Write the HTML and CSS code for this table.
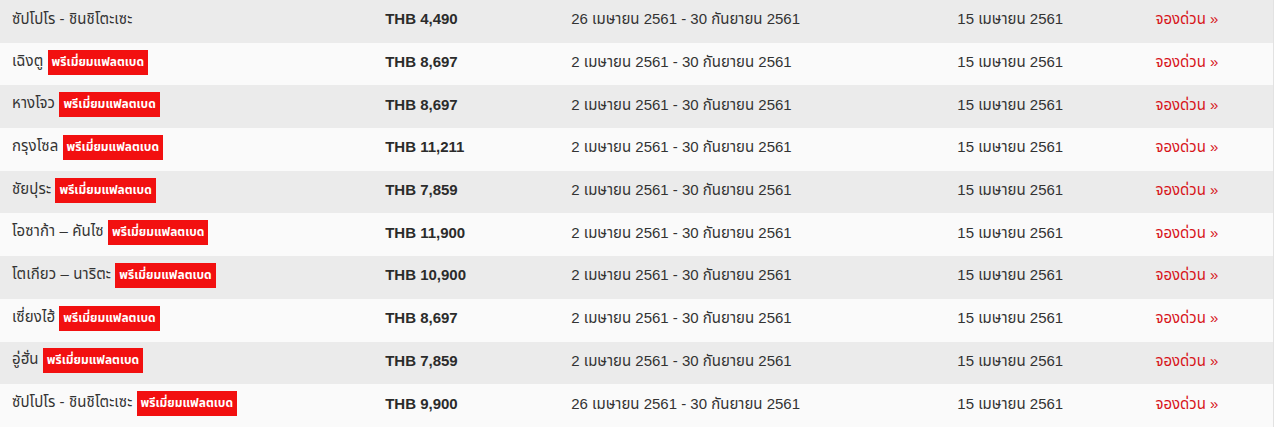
FILE: index.html
```html
<!DOCTYPE html>
<html lang="th">
<head>
<meta charset="utf-8">
<link rel="stylesheet" href="styles.css">
</head>
<body>
<table class="deals">
  <colgroup>
    <col class="c-name"><col class="c-price"><col class="c-travel"><col class="c-sale"><col class="c-link">
  </colgroup>
  <tbody>
    <tr><td class="name">ซัปโปโร - ชินชิโตะเซะ</td><td class="price">THB 4,490</td><td>26 เมษายน 2561 - 30 กันยายน 2561</td><td>15 เมษายน 2561</td><td><a class="book" href="#">จองด่วน »</a></td></tr>
    <tr><td class="name">เฉิงตู <span class="badge">พรีเมี่ยมแฟลตเบด</span></td><td class="price">THB 8,697</td><td>2 เมษายน 2561 - 30 กันยายน 2561</td><td>15 เมษายน 2561</td><td><a class="book" href="#">จองด่วน »</a></td></tr>
    <tr><td class="name">หางโจว <span class="badge">พรีเมี่ยมแฟลตเบด</span></td><td class="price">THB 8,697</td><td>2 เมษายน 2561 - 30 กันยายน 2561</td><td>15 เมษายน 2561</td><td><a class="book" href="#">จองด่วน »</a></td></tr>
    <tr><td class="name">กรุงโซล <span class="badge">พรีเมี่ยมแฟลตเบด</span></td><td class="price">THB 11,211</td><td>2 เมษายน 2561 - 30 กันยายน 2561</td><td>15 เมษายน 2561</td><td><a class="book" href="#">จองด่วน »</a></td></tr>
    <tr><td class="name">ชัยปุระ <span class="badge">พรีเมี่ยมแฟลตเบด</span></td><td class="price">THB 7,859</td><td>2 เมษายน 2561 - 30 กันยายน 2561</td><td>15 เมษายน 2561</td><td><a class="book" href="#">จองด่วน »</a></td></tr>
    <tr><td class="name">โอซาก้า – คันไซ <span class="badge">พรีเมี่ยมแฟลตเบด</span></td><td class="price">THB 11,900</td><td>2 เมษายน 2561 - 30 กันยายน 2561</td><td>15 เมษายน 2561</td><td><a class="book" href="#">จองด่วน »</a></td></tr>
    <tr><td class="name">โตเกียว – นาริตะ <span class="badge">พรีเมี่ยมแฟลตเบด</span></td><td class="price">THB 10,900</td><td>2 เมษายน 2561 - 30 กันยายน 2561</td><td>15 เมษายน 2561</td><td><a class="book" href="#">จองด่วน »</a></td></tr>
    <tr><td class="name">เซี่ยงไฮ้ <span class="badge">พรีเมี่ยมแฟลตเบด</span></td><td class="price">THB 8,697</td><td>2 เมษายน 2561 - 30 กันยายน 2561</td><td>15 เมษายน 2561</td><td><a class="book" href="#">จองด่วน »</a></td></tr>
    <tr><td class="name">อู่ฮั่น <span class="badge">พรีเมี่ยมแฟลตเบด</span></td><td class="price">THB 7,859</td><td>2 เมษายน 2561 - 30 กันยายน 2561</td><td>15 เมษายน 2561</td><td><a class="book" href="#">จองด่วน »</a></td></tr>
    <tr><td class="name">ซัปโปโร - ชินชิโตะเซะ <span class="badge">พรีเมี่ยมแฟลตเบด</span></td><td class="price">THB 9,900</td><td>26 เมษายน 2561 - 30 กันยายน 2561</td><td>15 เมษายน 2561</td><td><a class="book" href="#">จองด่วน »</a></td></tr>
  </tbody>
</table>
</body>
</html>
```
FILE: styles.css
```css
html, body {
  margin: 0;
  padding: 0;
  background: #ffffff;
}
body {
  font-family: "Liberation Sans", "Noto Sans Thai", "Noto Sans", Arial, sans-serif;
  font-size: 15px;
  color: #333333;
}
.deals {
  width: 1274px;
  border-collapse: collapse;
  table-layout: fixed;
  border-right: 1px solid #e2e2e2;
}
.c-name { width: 373px; }
.c-price { width: 186px; }
.c-travel { width: 386px; }
.c-sale { width: 198px; }
.c-link { width: 130px; }
.deals tr { height: 42.7px; }
.deals tr:nth-child(odd) { background: #ebebeb; }
.deals tr:nth-child(even) { background: #fafafa; }
.deals td {
  padding: 0 0 4px 12px;
  vertical-align: middle;
  white-space: nowrap;
  line-height: 20px;
}
.name {
  font-size: 15px;
  letter-spacing: 0.1px;
}
.price { font-weight: bold; color: #2b2b2b; }
.badge {
  display: inline-block;
  background: #f21010;
  color: #ffffff;
  font-weight: bold;
  font-size: 12px;
  letter-spacing: 0;
  line-height: 25px;
  padding: 0 4px;
  vertical-align: middle;
}
.book {
  color: #d7141a;
  text-decoration: none;
}
```
